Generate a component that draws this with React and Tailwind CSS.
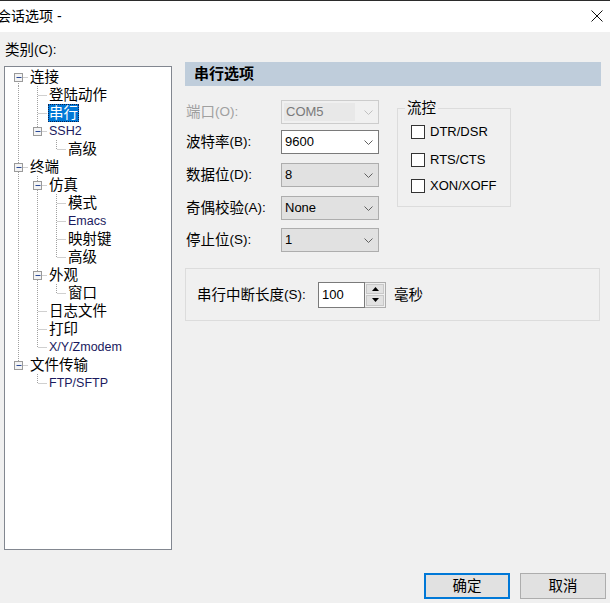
import React from "react";

const tree = [
  {
    label: "连接",
    children: [
      { label: "登陆动作" },
      { label: "串行", selected: true },
      { label: "SSH2", latin: true, children: [{ label: "高级" }] },
    ],
  },
  {
    label: "终端",
    children: [
      {
        label: "仿真",
        children: [
          { label: "模式" },
          { label: "Emacs", latin: true },
          { label: "映射键" },
          { label: "高级" },
        ],
      },
      { label: "外观", children: [{ label: "窗口" }] },
      { label: "日志文件" },
      { label: "打印" },
      { label: "X/Y/Zmodem", latin: true },
    ],
  },
  { label: "文件传输", children: [{ label: "FTP/SFTP", latin: true }] },
];

function flatten(nodes, level, cont, out) {
  nodes.forEach((n, i) => {
    const isLast = i === nodes.length - 1;
    const isFirstRoot = level === 0 && i === 0;
    out.push({ node: n, level, cont, isLast, isFirstRoot });
    if (n.children) flatten(n.children, level + 1, [...cont, !isLast], out);
  });
  return out;
}

const rows = flatten(tree, 0, [], []);

function Connector({ level, cont, isLast, isFirstRoot, hasChildren }) {
  const w = 19 * (level + 1);
  const dot = { stroke: "#a0a0a0", strokeWidth: 1, strokeDasharray: "1 1" };
  const x = 19 * level + 9.5;
  return (
    <svg width={w} height={18} className="shrink-0 block">
      {cont.map((c, j) =>
        c ? <line key={j} x1={19 * j + 9.5} y1={0} x2={19 * j + 9.5} y2={18} {...dot} /> : null
      )}
      <line x1={x} y1={isFirstRoot ? 9 : 0} x2={x} y2={isLast ? 9.5 : 18} {...dot} />
      <line x1={hasChildren ? x + 5 : x + 1} y1={9.5} x2={w} y2={9.5} {...dot} />
      {hasChildren && (
        <g>
          <rect x={x - 4} y={5.5} width={8} height={8} fill="#f4f4f4" stroke="#9a9a9a" />
          <line x1={x - 2} y1={9.5} x2={x + 3} y2={9.5} stroke="#2b4a98" strokeWidth={1} />
        </g>
      )}
    </svg>
  );
}

function Chevron({ color = "#606060" }) {
  return (
    <svg width="9" height="5" viewBox="0 0 9 5" className="block">
      <polyline points="0.5,0.5 4.5,4.5 8.5,0.5" fill="none" stroke={color} strokeWidth="1" />
    </svg>
  );
}

function Label({ zh, en, disabled }) {
  return (
    <div className={"w-[95px] flex items-center h-[24px] " + (disabled ? "text-[#a0a0a0]" : "text-black")}>
      <span className="text-[14.5px] leading-[18px]">{zh}</span>
      <span className="text-[13.5px] leading-[18px]">{en}</span>
    </div>
  );
}

function Combo({ value, variant }) {
  if (variant === "disabled") {
    return (
      <div className="w-[98px] h-[24px] border border-[#cccccc] bg-[#f0f0f0] flex items-center pl-[2px] pr-[5px]">
        <div className="w-[71px] h-[18px] bg-[#e8e8e8] flex items-center pl-[2px] text-[13px] text-[#7a7a7a]">
          {value}
        </div>
        <div className="ml-auto">
          <Chevron color="#c0c0c0" />
        </div>
      </div>
    );
  }
  const cls =
    variant === "white"
      ? "border-[#7a7a7a] bg-white"
      : "border-[#adadad] bg-[#e1e1e1]";
  return (
    <div className={"w-[98px] h-[24px] border flex items-center pl-[3px] pr-[5px] " + cls}>
      <span className="text-[13px] text-black">{value}</span>
      <div className="ml-auto">
        <Chevron />
      </div>
    </div>
  );
}

function Check({ label, className = "" }) {
  return (
    <div className={"flex items-center " + className}>
      <div className="w-[14px] h-[14px] border border-[#333333] bg-white" />
      <span className="ml-[5px] text-[13px] leading-[16px] text-black">{label}</span>
    </div>
  );
}

export default function App() {
  return (
    <div className="w-[610px] h-[603px] bg-[#f0f0f0] flex flex-col overflow-hidden font-['Liberation_Sans','Noto_Sans_CJK_SC',sans-serif] text-black select-none">
      {/* title bar */}
      <div className="h-[32px] shrink-0 bg-white border-t border-[#2b2b2b] flex items-center">
        <span className="-ml-[3px] text-[14px] leading-[18px] mb-[1px]">会话选项 -</span>
        <svg width="12" height="12" viewBox="0 0 12 12" className="ml-auto mr-[7px] mb-[1px]">
          <line x1="0.5" y1="0.5" x2="11.5" y2="11.5" stroke="#111" strokeWidth="1" />
          <line x1="11.5" y1="0.5" x2="0.5" y2="11.5" stroke="#111" strokeWidth="1" />
        </svg>
      </div>

      <div className="flex shrink-0">
        {/* left */}
        <div className="ml-[4px] flex flex-col">
          <div className="mt-[9px] pl-[1px] h-[18px] flex items-center">
            <span className="text-[14.5px] leading-[18px]">类别</span>
            <span className="text-[13.5px] leading-[18px]">(C):</span>
          </div>
          <div className="mt-[7px] w-[168px] h-[484px] border border-[#828790] bg-white pt-[1px] pl-[4px]">
            {rows.map((r, i) => {
              const n = r.node;
              return (
                <div key={i} className="flex items-center h-[18px]">
                  <Connector
                    level={r.level}
                    cont={r.cont}
                    isLast={r.isLast}
                    isFirstRoot={r.isFirstRoot}
                    hasChildren={!!n.children}
                  />
                  <div
                    className={
                      "ml-[1px] h-[18px] flex items-center px-[1px] " +
                      (n.selected
                        ? "bg-[#0078d7] text-white outline outline-1 outline-dotted outline-[#0a2050] -outline-offset-1"
                        : n.latin
                        ? "text-[#1a1a5e]"
                        : "text-black")
                    }
                  >
                    <span className={n.latin ? "text-[12.5px] leading-[16px]" : "text-[14.5px] leading-[18px]"}>
                      {n.label}
                    </span>
                  </div>
                </div>
              );
            })}
          </div>
        </div>

        {/* right */}
        <div className="ml-[13px] mt-[30px] flex flex-col w-[416px]">
          <div className="h-[24px] bg-[#bfcddb] flex items-center pl-[9px]">
            <span className="text-[15px] font-bold leading-[18px] text-black">串行选项</span>
          </div>

          <div className="flex">
            <div className="ml-[1px] flex flex-col">
              <div className="mt-[14px] flex items-center">
                <Label zh="端口" en="(O):" disabled />
                <Combo value="COM5" variant="disabled" />
              </div>
              <div className="mt-[6px] flex items-center">
                <Label zh="波特率" en="(B):" />
                <Combo value="9600" variant="white" />
              </div>
              <div className="mt-[9px] flex items-center">
                <Label zh="数据位" en="(D):" />
                <Combo value="8" />
              </div>
              <div className="mt-[9px] flex items-center">
                <Label zh="奇偶校验" en="(A):" />
                <Combo value="None" />
              </div>
              <div className="mt-[8px] flex items-center">
                <Label zh="停止位" en="(S):" />
                <Combo value="1" />
              </div>
            </div>

            <div className="ml-[18px] mt-[22px] w-[114px] h-[99px] border border-[#dcdcdc] relative pl-[13px] pt-[15px]">
              <span className="absolute -top-[10px] left-[7px] px-[2px] bg-[#f0f0f0] text-[14.5px] leading-[18px]">
                流控
              </span>
              <Check label="DTR/DSR" />
              <Check label="RTS/CTS" className="mt-[12px]" />
              <Check label="XON/XOFF" className="mt-[10px]" />
            </div>
          </div>

          <div className="mt-[16px] w-[415px] h-[53px] border border-[#dcdcdc] flex items-center pl-[11px]">
            <div className="w-[121px] flex items-center">
              <span className="text-[14.5px] leading-[18px]">串行中断长度</span>
              <span className="text-[13.5px] leading-[18px]">(S):</span>
            </div>
            <div className="flex h-[26px]">
              <div className="w-[47px] h-[26px] border border-[#7a7a7a] bg-white flex items-center pl-[3px]">
                <span className="text-[13px]">100</span>
              </div>
              <div className="w-[21px] h-[26px] border border-[#adadad] border-l-0 bg-[#f0f0f0] flex flex-col p-[1px] gap-[1px]">
                <div className="flex-1 bg-[#e1e1e1] border border-[#c8c8c8] flex items-center justify-center">
                  <svg width="7" height="4" viewBox="0 0 7 4"><polygon points="3.5,0 7,4 0,4" fill="#000" /></svg>
                </div>
                <div className="flex-1 bg-[#e1e1e1] border border-[#c8c8c8] flex items-center justify-center">
                  <svg width="7" height="4" viewBox="0 0 7 4"><polygon points="0,0 7,0 3.5,4" fill="#000" /></svg>
                </div>
              </div>
            </div>
            <span className="ml-[8px] text-[14.5px] leading-[18px]">毫秒</span>
          </div>
        </div>
      </div>

      {/* buttons */}
      <div className="mt-[23px] flex justify-end pr-[4px] gap-[10px]">
        <div className="w-[86px] h-[26px] border-2 border-[#0078d7] bg-[#e1e1e1] flex items-center justify-center">
          <span className="text-[14.5px] leading-[18px]">确定</span>
        </div>
        <div className="w-[86px] h-[26px] border border-[#adadad] bg-[#e1e1e1] flex items-center justify-center">
          <span className="text-[14.5px] leading-[18px]">取消</span>
        </div>
      </div>
    </div>
  );
}
